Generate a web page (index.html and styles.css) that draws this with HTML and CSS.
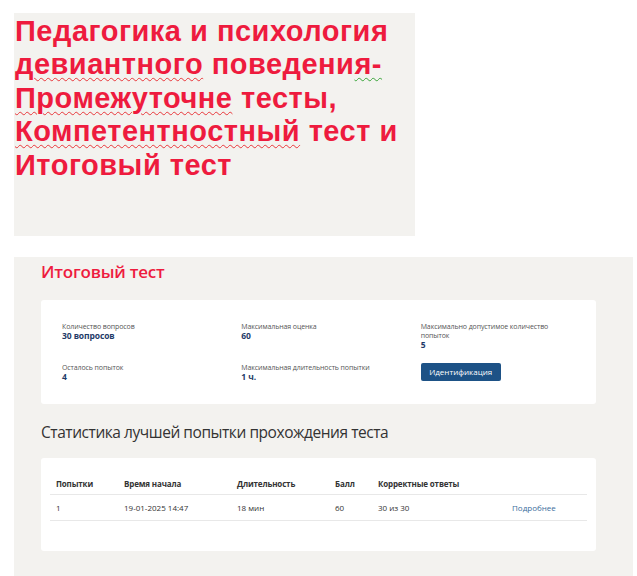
FILE: index.html
```html
<!DOCTYPE html>
<html lang="ru">
<head>
<meta charset="utf-8">
<title>Итоговый тест</title>
<link rel="stylesheet" href="styles.css">
</head>
<body>
<div class="hero">
  <h1 class="hero-title">Педагогика и психология<br><span class="sp">девиантного</span> поведени<span class="gr">я-</span><br><span class="sp">Промежуточне</span> тесты,<br><span class="sp">Компетентностный</span> тест и<br>Итоговый тест</h1>
</div>
<section class="panel">
  <h2 class="panel-title">Итоговый тест</h2>
  <div class="card info">
    <div class="info-item">
      <div class="lbl">Количество вопросов</div>
      <div class="val">30 вопросов</div>
    </div>
    <div class="info-item">
      <div class="lbl">Максимальная оценка</div>
      <div class="val">60</div>
    </div>
    <div class="info-item">
      <div class="lbl lbl-narrow">Максимально допустимое количество попыток</div>
      <div class="val">5</div>
    </div>
    <div class="info-item">
      <div class="lbl">Осталось попыток</div>
      <div class="val">4</div>
    </div>
    <div class="info-item">
      <div class="lbl">Максимальная длительность попытки</div>
      <div class="val">1 ч.</div>
    </div>
    <div class="info-item">
      <button class="btn">Идентификация</button>
    </div>
  </div>
  <h3 class="stats-title">Статистика лучшей попытки прохождения теста</h3>
  <div class="card stats">
    <table class="tbl">
      <thead>
        <tr>
          <th class="c1">Попытки</th>
          <th class="c2">Время начала</th>
          <th class="c3">Длительность</th>
          <th class="c4">Балл</th>
          <th class="c5">Корректные ответы</th>
          <th class="c6"></th>
        </tr>
      </thead>
      <tbody>
        <tr>
          <td>1</td>
          <td>19-01-2025 14:47</td>
          <td>18 мин</td>
          <td>60</td>
          <td>30 из 30</td>
          <td><a class="more" href="#">Подробнее</a></td>
        </tr>
      </tbody>
    </table>
  </div>
</section>
</body>
</html>
```
FILE: styles.css
```css
* { box-sizing: border-box; }
html, body { margin: 0; padding: 0; background: #ffffff; }
body { font-family: "Open Sans", "Liberation Sans", sans-serif; color: #333333; }

.hero {
  margin: 13px 0 0 14px;
  width: 401px;
  height: 223px;
  background: #f3f2ef;
  padding: 2px 0 0 1px;
}
.hero-title {
  margin: 0;
  font-family: "Liberation Sans", Arial, sans-serif;
  font-weight: 700;
  font-size: 29px;
  line-height: 33.4px;
  letter-spacing: 0.5px;
  white-space: nowrap;
  color: #ee1b3e;
}
.sp {
  text-decoration: underline wavy #e8363a;
  text-decoration-thickness: 1px;
  text-underline-offset: 3px;
}
.gr {
  text-decoration: underline wavy #3aa53a;
  text-decoration-thickness: 1px;
  text-underline-offset: 3px;
}

.panel {
  margin: 21px 0 0 14px;
  width: 619px;
  min-height: 330px;
  background: #f3f2ef;
  padding: 3px 37px 0 27px;
}
.panel-title {
  margin: 0 0 17px;
  font-size: 17px;
  line-height: 23px;
  font-weight: 600;
  letter-spacing: -0.2px;
  color: #ee1b3e;
}
.card {
  background: #ffffff;
  border-radius: 3px;
  width: 555px;
}
.info {
  display: grid;
  grid-template-columns: repeat(3, 1fr);
  column-gap: 25px;
  row-gap: 13px;
  padding: 22px 21px 22px 21px;
}
.lbl {
  font-size: 7px;
  line-height: 9px;
  letter-spacing: -0.1px;
  color: #555555;
}
.lbl-narrow { max-width: 135px; }
.val {
  font-size: 8.5px;
  line-height: 10px;
  font-weight: 700;
  letter-spacing: -0.1px;
  color: #1f3b68;
}
.btn {
  display: block;
  width: 80px;
  height: 18px;
  padding: 0;
  border: none;
  border-radius: 2px;
  background: #1d5286;
  color: #ffffff;
  font-family: "Open Sans", "Liberation Sans", sans-serif;
  font-size: 8px;
  line-height: 18px;
  text-align: center;
}

.stats-title {
  margin: 17px 0 15px;
  font-size: 15.5px;
  line-height: 22px;
  font-weight: 400;
  letter-spacing: -0.45px;
  color: #333333;
}
.stats {
  height: 93px;
  padding: 16px 9px 0 9px;
}
.tbl {
  width: 100%;
  border-collapse: collapse;
  font-size: 8px;
  color: #333333;
}
.tbl th, .tbl td {
  text-align: left;
  padding: 0 0 0 6px;
  border-bottom: 1px solid #e8e8e8;
}
.tbl th {
  height: 20px;
  font-weight: 700;
  letter-spacing: -0.15px;
  vertical-align: middle;
}
.tbl td {
  height: 26px;
  font-weight: 400;
  vertical-align: middle;
}
.c1 { width: 68px; }
.c2 { width: 113px; }
.c3 { width: 98px; }
.c4 { width: 43px; }
.c5 { width: 134px; }
.more {
  color: #3b6c9c;
  text-decoration: none;
}
```
